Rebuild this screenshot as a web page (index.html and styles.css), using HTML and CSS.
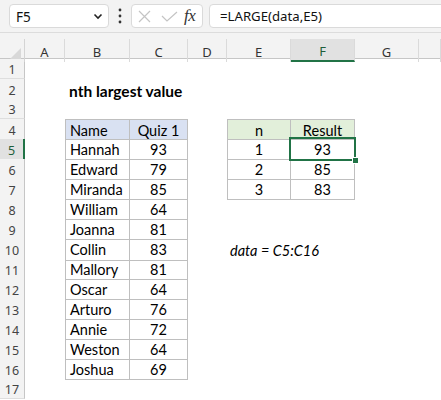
FILE: index.html
```html
<!DOCTYPE html>
<html>
<head>
<meta charset="utf-8">
<link rel="stylesheet" href="styles.css">
</head>
<body>
<div class="app">
  <div class="fbar">
    <div class="namebox">
      <span class="nb-text">F5</span>
      <svg class="chev" width="10" height="7" viewBox="0 0 10 7"><path d="M1.5 1.5 L5 5 L8.5 1.5" fill="none" stroke="#222" stroke-width="1.6"/></svg>
    </div>
    <div class="dots">
      <svg width="4" height="16" viewBox="0 0 4 16"><circle cx="2" cy="2" r="1.4" fill="#333"/><circle cx="2" cy="8" r="1.4" fill="#333"/><circle cx="2" cy="14" r="1.4" fill="#333"/></svg>
    </div>
    <div class="fxbox">
      <svg class="ico-x" width="13" height="13" viewBox="0 0 13 13"><path d="M1 1 L12 12 M12 1 L1 12" stroke="#c4c4c4" stroke-width="1.2" fill="none"/></svg>
      <svg class="ico-ok" width="17" height="11" viewBox="0 0 17 11"><path d="M1 5 L6 10 L16 1" stroke="#c4c4c4" stroke-width="1.2" fill="none"/></svg>
      <span class="fx">fx</span>
    </div>
    <div class="formula">=LARGE(data,E5)</div>
  </div>
  <div class="gapline"></div>
  <div class="sheet">
    <div class="row hdr">
      <div class="corner"><span class="tri"></span></div>
      <div class="ch">A</div><div class="ch">B</div><div class="ch">C</div><div class="ch">D</div>
      <div class="ch">E</div><div class="ch sel">F</div><div class="ch">G</div><div class="ch"></div>
    </div>
    <div class="row"><div class="rh">1</div></div>
    <div class="row"><div class="rh">2</div><div class="c"></div><div class="c title">nth largest value</div></div>
    <div class="row"><div class="rh">3</div></div>
    <div class="row">
      <div class="rh">4</div><div class="c"></div>
      <div class="c t tl tt hb">Name</div><div class="c t tt hb num">Quiz 1</div><div class="c"></div>
      <div class="c t tl tt hg num">n</div><div class="c t tt hg num">Result</div>
    </div>
    <div class="row">
      <div class="rh rsel">5</div><div class="c"></div>
      <div class="c t tl">Hannah</div><div class="c t num">93</div><div class="c"></div>
      <div class="c t tl num">1</div><div class="c t num active">93<span class="handle"></span></div>
    </div>
    <div class="row">
      <div class="rh">6</div><div class="c"></div>
      <div class="c t tl">Edward</div><div class="c t num">79</div><div class="c"></div>
      <div class="c t tl num">2</div><div class="c t num">85</div>
    </div>
    <div class="row">
      <div class="rh">7</div><div class="c"></div>
      <div class="c t tl">Miranda</div><div class="c t num">85</div><div class="c"></div>
      <div class="c t tl num">3</div><div class="c t num">83</div>
    </div>
    <div class="row"><div class="rh">8</div><div class="c"></div><div class="c t tl">William</div><div class="c t num">64</div></div>
    <div class="row"><div class="rh">9</div><div class="c"></div><div class="c t tl">Joanna</div><div class="c t num">81</div></div>
    <div class="row">
      <div class="rh">10</div><div class="c"></div><div class="c t tl">Collin</div><div class="c t num">83</div><div class="c"></div>
      <div class="c note">data = C5:C16</div>
    </div>
    <div class="row"><div class="rh">11</div><div class="c"></div><div class="c t tl">Mallory</div><div class="c t num">81</div></div>
    <div class="row"><div class="rh">12</div><div class="c"></div><div class="c t tl">Oscar</div><div class="c t num">64</div></div>
    <div class="row"><div class="rh">13</div><div class="c"></div><div class="c t tl">Arturo</div><div class="c t num">76</div></div>
    <div class="row"><div class="rh">14</div><div class="c"></div><div class="c t tl">Annie</div><div class="c t num">72</div></div>
    <div class="row"><div class="rh">15</div><div class="c"></div><div class="c t tl">Weston</div><div class="c t num">64</div></div>
    <div class="row"><div class="rh">16</div><div class="c"></div><div class="c t tl">Joshua</div><div class="c t num">69</div></div>
    <div class="row"><div class="rh">17</div></div>
  </div>
</div>
</body>
</html>
```
FILE: styles.css
```css
* { box-sizing: border-box; }
html, body { margin: 0; padding: 0; background: #fff; }
.app { width: 441px; height: 400px; overflow: hidden; font-family: "Lato", "Liberation Sans", sans-serif; }

.fbar {
  height: 33px;
  background: #f3f3f3;
  display: flex;
  align-items: center;
  padding-left: 9px;
  border-bottom: 1px solid #dcdcdc;
  font-family: "Noto Sans", "Open Sans", sans-serif;
  color: #111;
}
.namebox {
  width: 100px; height: 24px;
  background: #fff;
  border: 1px solid #dadada;
  border-radius: 4px;
  display: flex; align-items: center; justify-content: space-between;
  padding: 0 5px 0 6px;
  font-size: 13.5px;
}
.nb-text { padding-top: 1px; }
.chev { margin-top: 1px; }
.dots { width: 22px; display: flex; justify-content: center; align-items: center; }
.fxbox {
  width: 72px; height: 24px;
  background: #fff;
  border: 1px solid #dadada;
  border-radius: 4px;
  display: flex; align-items: center;
  padding-left: 6px;
  gap: 9px;
}
.ico-ok { margin-left: 1px; }
.fx {
  font-family: "Liberation Serif", "DejaVu Serif", serif;
  font-style: italic;
  font-size: 17px;
  color: #333;
  margin-left: -3px;
  letter-spacing: -0.5px;
}
.formula {
  flex: 1;
  margin-left: 6px;
  margin-right: -10px;
  height: 24px;
  background: #fff;
  border: 1px solid #dadada;
  border-radius: 4px;
  display: flex; align-items: center;
  padding-left: 10px;
  font-size: 13.2px;
}
.gapline { height: 6px; background: #f3f3f3; }

.sheet { background: #fff; }
.row {
  display: grid;
  grid-template-columns: 25px 40px 65px 58px 39px 64px 64px 64px 22px;
  height: 20px;
}
.hdr { background: #f3f3f3; border-bottom: 1px solid #c6c6c6; height: 20px; }
.corner { position: relative; border-right: 1px solid #d4d4d4; }
.tri {
  position: absolute; right: 3px; bottom: 3px;
  width: 0; height: 0;
  border-left: 11px solid transparent;
  border-bottom: 11px solid #d8d8d8;
}
.ch {
  border-right: 1px solid #dadada;
  display: flex; align-items: center; justify-content: center;
  font-family: "Noto Sans", "Open Sans", sans-serif;
  font-size: 13px;
  color: #333;
  padding-top: 2px;
}
.ch.sel { background: #e1e1e1; border-bottom: 2px solid #217346; color: #1e5e3a; padding-top: 3px; }
.rh {
  background: #f3f3f3;
  border-right: 1px solid #c6c6c6;
  border-bottom: 1px solid #dedede;
  display: flex; align-items: center; justify-content: center;
  font-family: "Noto Sans", "Open Sans", sans-serif;
  font-size: 12.5px;
  color: #444;
  padding-top: 2px;
}
.rh.rsel { background: #e1e1e1; border-right: 2px solid #217346; color: #1e5e3a; }

.c {
  font-size: 14.5px;
  line-height: 20px;
  padding: 2px 4px 0;
  white-space: nowrap;
  color: #000;
}
.title { font-weight: bold; font-size: 15.5px; }
.t { border-right: 1px solid #bfbfbf; border-bottom: 1px solid #bfbfbf; line-height: 18px; }
.tl { border-left: 1px solid #bfbfbf; }
.tt { border-top: 1px solid #bfbfbf; line-height: 17px; }
.num { text-align: center; }
.hb { background: #d9e1f2; }
.hg { background: #e2efda; }
.active { position: relative; }
.active::after {
  content: "";
  position: absolute;
  left: -2px; top: -2px; right: -2px; bottom: -2px;
  border: 2px solid #217346;
}
.handle {
  position: absolute;
  right: -5px; bottom: -5px;
  width: 7px; height: 7px;
  background: #217346;
  border: 1px solid #fff;
  z-index: 2;
}
.note { font-style: italic; padding-left: 3px; }
```
